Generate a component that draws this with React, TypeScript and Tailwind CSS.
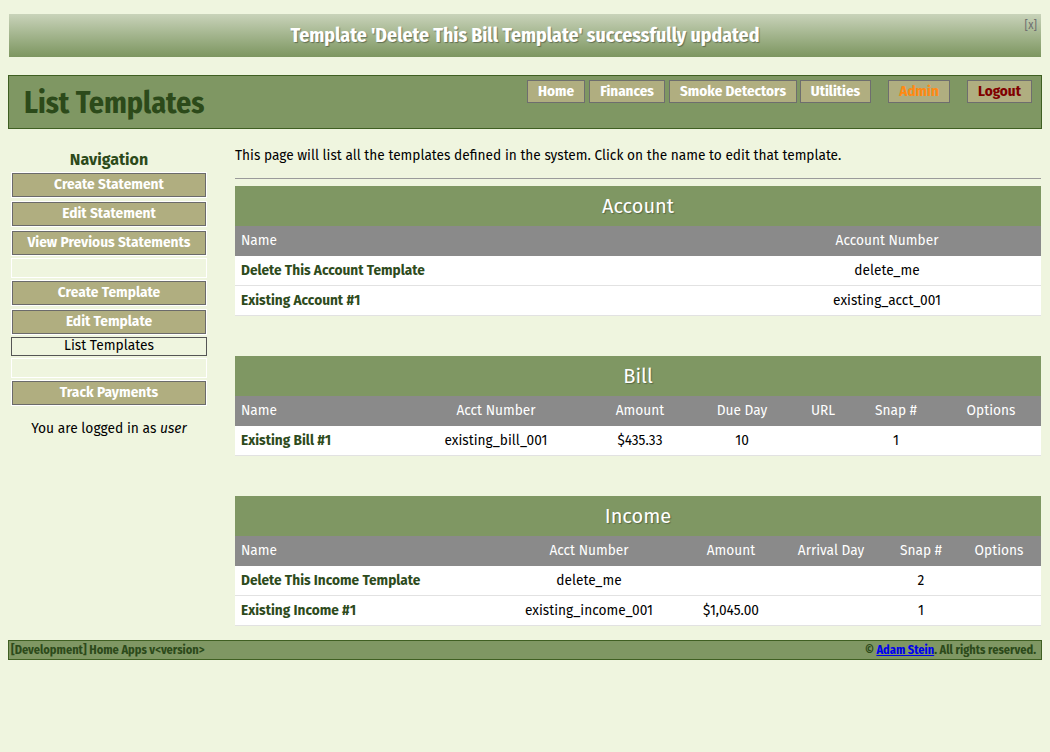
import React from 'react';

const body = "font-['Fira_Sans','Lato','Liberation_Sans',sans-serif]";
const narrow = "font-['Fira_Sans_Condensed','Fira_Sans','Liberation_Sans_Narrow',sans-serif]";

type Col = { label: string; w: string; left?: boolean };

function Section(props: { title: string; cols: Col[]; rows: string[][] }) {
  return (
    <div className="w-full">
      <div className="flex h-[40px] items-center justify-center bg-[#7f9763] text-[20px] text-white [text-shadow:1px_1px_1px_rgba(0,0,0,0.3)]">
        {props.title}
      </div>
      <div className="flex h-[30px] items-center bg-[#8a8a8a] text-[13.7px] text-white">
        {props.cols.map(c => (
          <div key={c.label} className={`${c.w} ${c.left ? 'pl-[6px] text-left' : 'text-center'}`}>{c.label}</div>
        ))}
      </div>
      {props.rows.map(r => (
        <div key={r[0]} className="flex h-[30px] items-center border-b border-[#e2e2e2] bg-white pt-[1px] text-[13.7px]">
          {props.cols.map((c, i) => (
            <div
              key={c.label}
              className={`${c.w} ${i === 0 ? 'pl-[6px] text-left font-bold text-[#2e4b1c]' : 'text-center text-black'}`}
            >
              {r[i] ?? ''}
            </div>
          ))}
        </div>
      ))}
    </div>
  );
}

function NavItem(props: { label: string; gap: string }) {
  return (
    <div className={`border border-white ${props.gap}`}>
      <div className="flex h-[24px] items-center justify-center border border-[#6b6b6b] bg-[#b0ae80] text-[13.8px] font-bold text-white">
        {props.label}
      </div>
    </div>
  );
}

function Spacer() {
  return <div className="mt-[2px] h-[20px] border border-white" />;
}

const topLinks = [
  { label: 'Home', w: 'w-[58px] mr-[4px]' },
  { label: 'Finances', w: 'w-[76px] mr-[4px]' },
  { label: 'Smoke Detectors', w: 'w-[128px] mr-[3px]' },
  { label: 'Utilities', w: 'w-[71px] mr-[4px]' },
];

export default function App() {
  return (
    <div className={`min-h-[752px] bg-[#eff5df] pt-[14px] pb-[92px] ${body}`}>
      <div className="relative mx-[9px] flex h-[43px] items-center justify-center bg-gradient-to-b from-[#c9d3ba] to-[#7d9660]">
        <span className={`text-[19.8px] font-bold text-white [text-shadow:1px_1px_1px_rgba(0,0,0,0.35)] ${narrow}`}>
          Template 'Delete This Bill Template' successfully updated
        </span>
        <span className={`absolute top-[2px] right-[4px] text-[12px] text-[#707070] ${narrow}`}>[x]</span>
      </div>

      <div className="mx-[8px] mt-[18px] flex h-[54px] justify-between border border-[#3f5f22] bg-[#7f9763] pr-[9px]">
        <div className={`pl-[15px] pt-[5px] text-[30px] font-bold text-[#2c4a1a] ${narrow}`}>List Templates</div>
        <div className={`flex items-start pt-[4px] text-[15px] font-bold ${narrow}`}>
          {topLinks.map(l => (
            <div key={l.label} className={`flex h-[23px] items-center justify-center border border-[#6e6e6e] bg-[#b0ae80] text-white ${l.w}`}>
              {l.label}
            </div>
          ))}
          <div className="ml-[13px] flex h-[23px] w-[62px] items-center justify-center border border-[#6e6e6e] bg-[#b0ae80] text-[#ff8a14]">Admin</div>
          <div className="ml-[17px] flex h-[23px] w-[65px] items-center justify-center border border-[#6e6e6e] bg-[#b0ae80] text-[#800000]">Logout</div>
        </div>
      </div>

      <div className="flex pt-[15px]">
        <div className="ml-[11px] w-[196px]">
          <div className="h-[28px] pt-[6px] text-center text-[16px] font-bold leading-[20px] text-[#2c4a1a]">Navigation</div>
          <div className="flex flex-col">
            <NavItem label="Create Statement" gap="mt-0" />
            <NavItem label="Edit Statement" gap="mt-[3px]" />
            <NavItem label="View Previous Statements" gap="mt-[3px]" />
            <Spacer />
            <NavItem label="Create Template" gap="mt-[2px]" />
            <NavItem label="Edit Template" gap="mt-[3px]" />
            <div className="mt-[2px] flex h-[19px] items-center justify-center border border-[#555] text-[13.8px] text-black">List Templates</div>
            <Spacer />
            <NavItem label="Track Payments" gap="mt-[2px]" />
          </div>
          <div className="mt-[13px] text-center text-[13.8px] text-black">
            You are logged in as <i>user</i>
          </div>
        </div>

        <div className="ml-[28px] w-[806px]">
          <div className="pt-[2px] text-[13.7px] leading-[20px] text-black">
            This page will list all the templates defined in the system. Click on the name to edit that template.
          </div>
          <div className="mt-[12px] mb-[7px] h-px bg-[#9a9a9a]" />
          <div className="flex flex-col gap-[40px]">
            <Section
              title="Account"
              cols={[
                { label: 'Name', w: 'w-[498px]', left: true },
                { label: 'Account Number', w: 'w-[308px]' },
              ]}
              rows={[
                ['Delete This Account Template', 'delete_me'],
                ['Existing Account #1', 'existing_acct_001'],
              ]}
            />
            <Section
              title="Bill"
              cols={[
                { label: 'Name', w: 'w-[166px]', left: true },
                { label: 'Acct Number', w: 'w-[190px]' },
                { label: 'Amount', w: 'w-[98px]' },
                { label: 'Due Day', w: 'w-[106px]' },
                { label: 'URL', w: 'w-[56px]' },
                { label: 'Snap #', w: 'w-[90px]' },
                { label: 'Options', w: 'w-[100px]' },
              ]}
              rows={[['Existing Bill #1', 'existing_bill_001', '$435.33', '10', '', '1', '']]}
            />
            <Section
              title="Income"
              cols={[
                { label: 'Name', w: 'w-[258px]', left: true },
                { label: 'Acct Number', w: 'w-[192px]' },
                { label: 'Amount', w: 'w-[92px]' },
                { label: 'Arrival Day', w: 'w-[108px]' },
                { label: 'Snap #', w: 'w-[72px]' },
                { label: 'Options', w: 'w-[84px]' },
              ]}
              rows={[
                ['Delete This Income Template', 'delete_me', '', '', '2', ''],
                ['Existing Income #1', 'existing_income_001', '$1,045.00', '', '1', ''],
              ]}
            />
          </div>
        </div>
      </div>

      <div className={`mx-[8px] mt-[14px] flex h-[20px] items-center justify-between border border-[#3f5f22] bg-[#7f9763] px-[2px] text-[12.3px] font-bold text-[#2c4a1a] ${narrow}`}>
        <span>[Development] Home Apps v&lt;version&gt;</span>
        <span className="pr-[3px]">
          © <span className="text-[#0000ee] underline">Adam Stein</span>. All rights reserved.
        </span>
      </div>
    </div>
  );
}
